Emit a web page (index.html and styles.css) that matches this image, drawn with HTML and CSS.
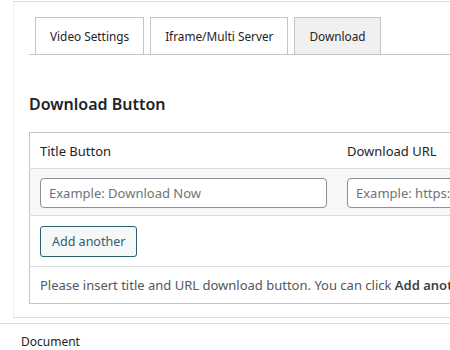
FILE: index.html
```html
<!DOCTYPE html>
<html lang="en">
<head>
  <meta charset="UTF-8" />
  <meta name="viewport" content="width=device-width, initial-scale=1.0"/>
  <title>Download Button</title>
  <link rel="stylesheet" href="styles.css">
</head>
<body>
  <div class="panel">
    <!-- tabs -->
    <nav class="tabs">
      <a class="tab">Video Settings</a>
      <a class="tab">Iframe/Multi Server</a>
      <a class="tab active">Download</a>
    </nav>

    <h2 class="title">Download Button</h2>

    <table class="repeater">
      <thead>
        <tr>
          <th>Title Button</th>
          <th>Download URL</th>
        </tr>
      </thead>
      <tbody>
        <tr class="row">
          <td><input type="text" placeholder="Example: Download Now"></td>
          <td><input type="text" placeholder="Example: https://"></td>
        </tr>
        <tr class="actions">
          <td colspan="2"><button class="add-btn">Add another</button></td>
        </tr>
        <tr class="note">
          <td colspan="2">Please insert title and URL download button. You can click <strong>Add another</strong> to add more.</td>
        </tr>
      </tbody>
    </table>
  </div>

  <div class="doc-bar">Document</div>
</body>
</html>
```

FILE: styles.css
```css
body {
  margin: 0;
  padding-top: 1px;
  font-family: "Noto Sans", "Open Sans", sans-serif;
  font-size: 13px;
  color: #1d2327;
  background: #fff;
  overflow: hidden;
}

/* panel */
.panel {
  margin-left: 13px;
  padding: 15px 0 13px 15px;
  border-top: 1px solid #dcdcde;
  border-left: 1px solid #f0f0f1;
  border-bottom: 1px solid #dcdcde;
}

/* tabs */
.tabs {
  display: flex;
  gap: 6px;
  padding-left: 6px;
  border-bottom: 1px solid #c3c4c7;
}
.tab {
  display: block;
  padding: 0 14px;
  font-size: 11.8px;
  line-height: 36px;
  border: 1px solid #c3c4c7;
  border-bottom: none;
  background: #fff;
  color: #1d2327;
  white-space: nowrap;
}
.tab.active {
  background: #f0f0f1;
}

.title {
  margin: 37px 0 16px;
  font-size: 16px;
  font-weight: 600;
  line-height: 24px;
}

/* repeater table */
.repeater {
  width: 616px;
  border-collapse: collapse;
  border: 1px solid #c3c4c7;
  table-layout: fixed;
}
.repeater th {
  text-align: left;
  font-weight: 400;
  height: 35px;
  padding: 0 10px;
  border-bottom: 1px solid #dcdcde;
}
.repeater td {
  padding: 0 10px;
}
.row td {
  background: #f6f7f7;
  height: 46px;
  border-bottom: 1px solid #dcdcde;
}
.row input {
  box-sizing: border-box;
  width: 100%;
  height: 30px;
  margin-top: 1px;
  padding: 0 8px;
  border: 1px solid #8c8f94;
  border-radius: 4px;
  font: inherit;
  color: #2c3338;
  background: #fff;
}
.row input::placeholder {
  color: #6e7377;
}
.actions td {
  height: 50px;
  border-bottom: 1px solid #dcdcde;
}
.add-btn {
  height: 31px;
  margin-top: 1px;
  padding: 0 11px;
  border: 1px solid #2c5f74;
  border-radius: 3px;
  background: #f6f7f7;
  color: #2c5f74;
  font: inherit;
  font-size: 12.5px;
}
.note td {
  height: 36px;
  color: #50575e;
  white-space: nowrap;
}
.note strong {
  color: #3c434a;
  font-weight: 600;
}

/* bottom bar */
.doc-bar {
  margin-top: 5px;
  border-top: 1px solid #dcdcde;
  padding: 9px 0 0 21px;
  font-size: 12px;
  line-height: 18px;
  color: #1e1e1e;
}
```
